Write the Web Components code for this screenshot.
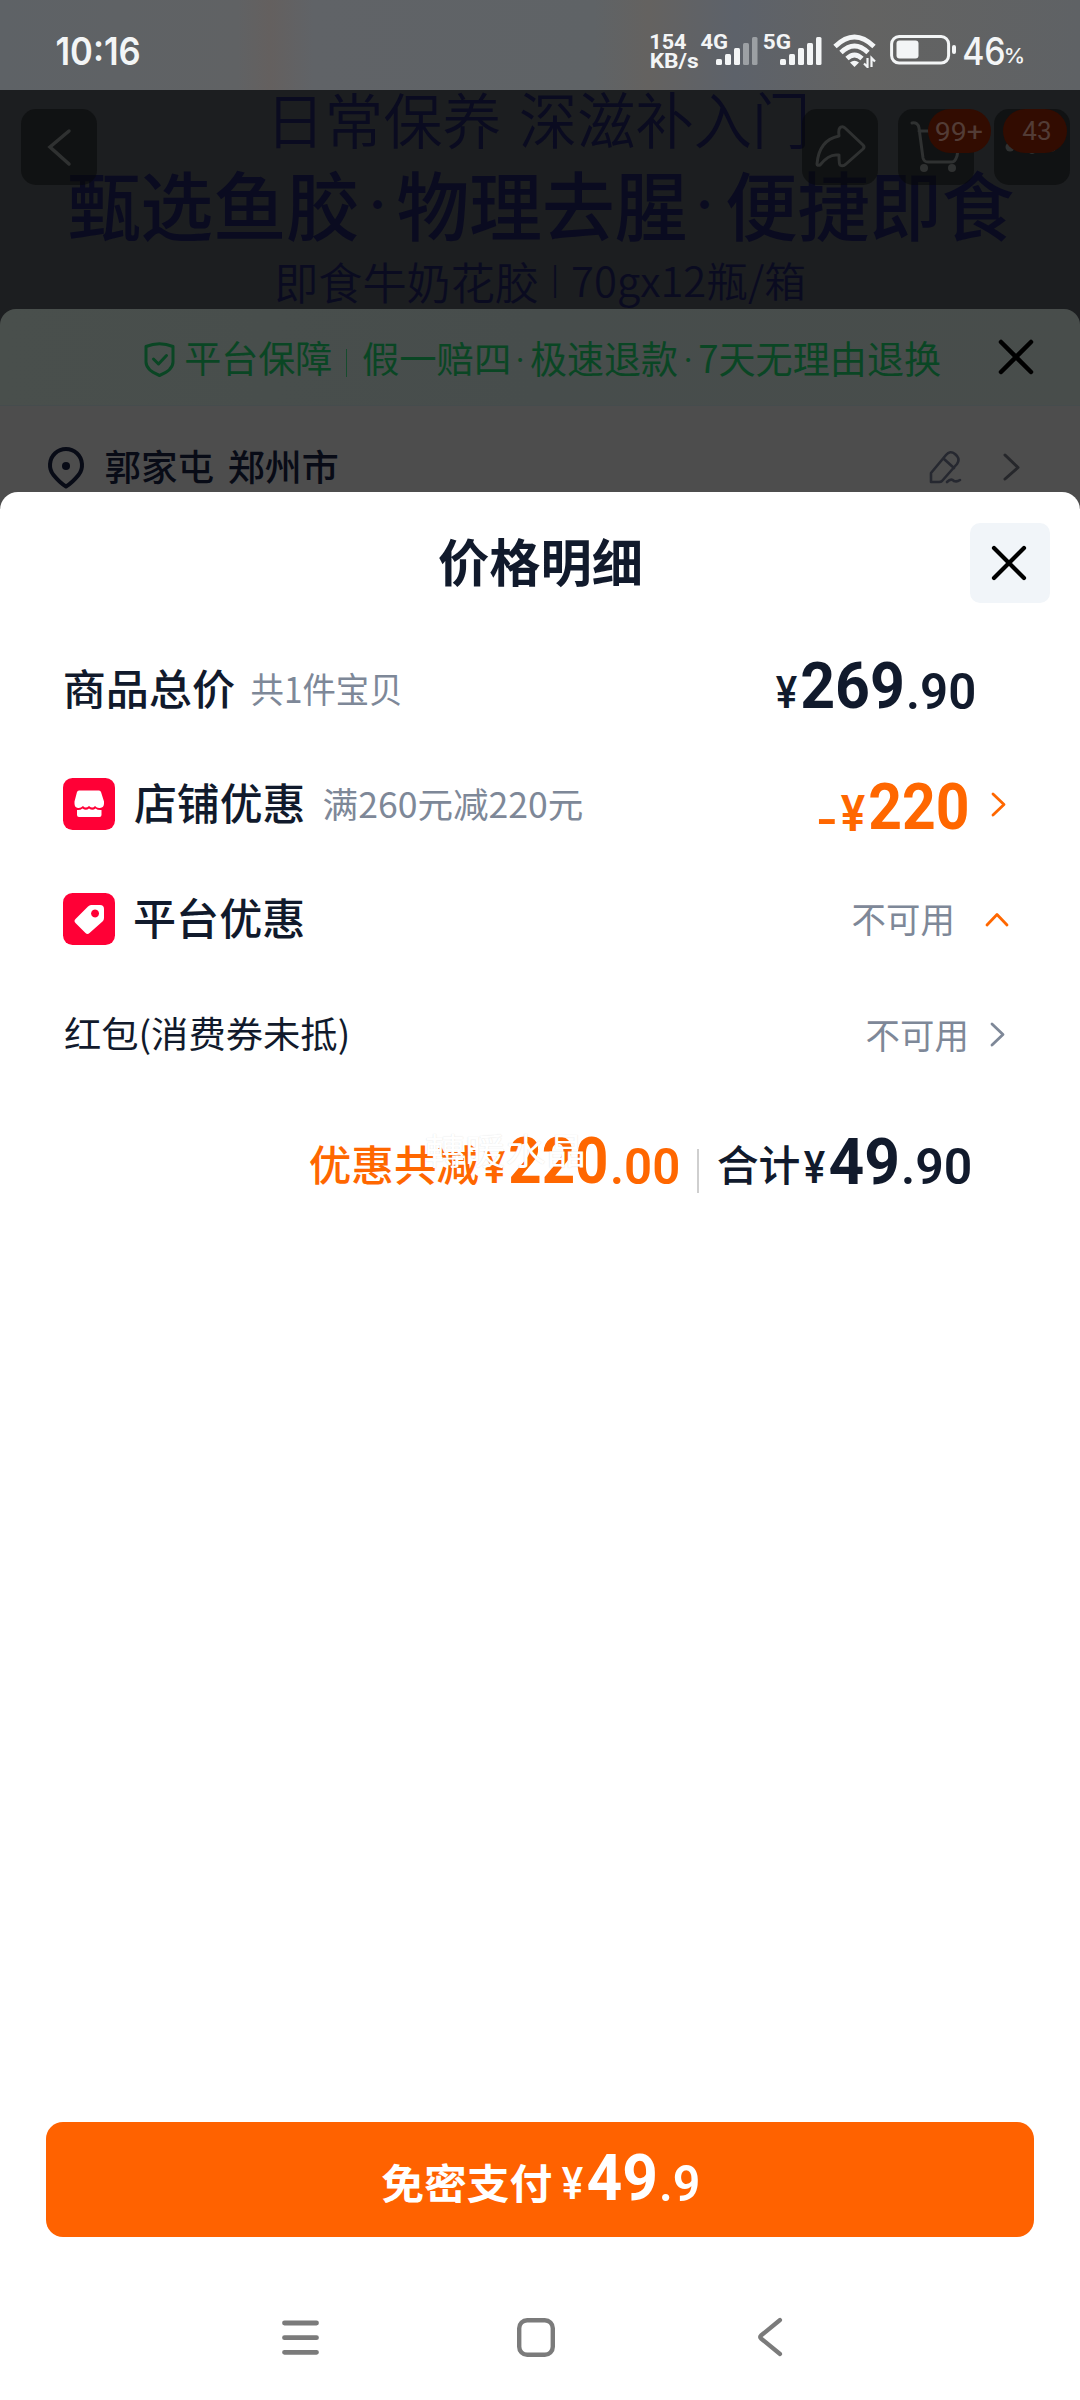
<!DOCTYPE html>
<html lang="zh-CN">
<head>
<meta charset="utf-8">
<title>价格明细</title>
<style>
html,body{margin:0;padding:0;background:#fff}
body{width:1080px;height:2400px;overflow:hidden;font-family:"Noto Sans CJK SC",sans-serif}
</style>
</head>
<body>
<phone-screen>
  <status-bar></status-bar>
  <product-hero></product-hero>
  <order-panel></order-panel>
  <price-sheet></price-sheet>
</phone-screen>
<script>
const define=(name,html,extra)=>customElements.define(name,class extends HTMLElement{
  connectedCallback(){
    if(this.shadowRoot)return;
    this.attachShadow({mode:'open'}).innerHTML=html;
    if(extra)extra(this,this.shadowRoot);
  }
});

/* Text whose visible ink fills a box of w × h pixels. */
const pen=document.createElement('canvas').getContext('2d');
customElements.define('fit-text',class extends HTMLElement{
  connectedCallback(){
    if(this.shadowRoot)return;
    const w=+this.getAttribute('w'),h=+this.getAttribute('h');
    const m=(this.getAttribute('m')||'0 0').split(' ');
    this.attachShadow({mode:'open'}).innerHTML=
      `<style>:host{display:block;flex:none;width:${w}px;height:${h}px;margin:${m[0]}px 0 0 ${m[1]}px}
      div{display:block;width:max-content;white-space:nowrap;line-height:1;transform-origin:0 0}
      i{display:inline-block;width:0;height:0}</style><div><i></i><slot></slot></div>`;
    const cs=getComputedStyle(this);
    pen.font=`${cs.fontWeight} 200px ${cs.fontFamily}`;
    const a=pen.measureText(this.textContent);
    const size=200*h/(a.actualBoundingBoxAscent+a.actualBoundingBoxDescent);
    const k=size/200,box=this.shadowRoot.querySelector('div');
    box.style.fontSize=size+'px';
    const base=this.shadowRoot.querySelector('i').getBoundingClientRect().bottom-box.getBoundingClientRect().top;
    const sx=w/((a.actualBoundingBoxLeft+a.actualBoundingBoxRight)*k);
    box.style.transform=`matrix(${sx},0,0,1,${a.actualBoundingBoxLeft*k*sx},${a.actualBoundingBoxAscent*k-base})`;
  }
});

define('status-bar',`<style>
:host{display:flex;height:90px;align-items:flex-start;color:#f3f5f6;font-family:Inter,sans-serif;font-weight:600;
background:linear-gradient(90deg,#5e6266 0,#606264 22%,#64605f 25%,#606367 29%,#5f6366 55%,#646260 60%,#5d626a 68%,#636362 80%,#5f6265 100%)}
svg{flex:none;display:block}
.net{font-family:Roboto,sans-serif;font-weight:700;display:flex;flex-direction:column}
.b{font-family:Roboto,sans-serif;font-weight:700}
.n{font-weight:500}
.p{font-weight:500}
</style>
<fit-text w="82" h="28" m="37 57">10:16</fit-text>
<div class="net" style="margin-left:511px;width:48px"><fit-text w="35" h="15" m="34 1">154</fit-text><fit-text w="47" h="16" m="4 1">KB/s</fit-text></div>
<fit-text class="b" w="26" h="15" m="34 3">4G</fit-text>
<svg width="42" height="28" style="margin:37px 0 0 -11px" fill="currentColor"><rect y="22" width="6" height="6" rx="1.5"/><rect x="9" y="17" width="6" height="11" rx="1.5"/><rect x="18" y="11" width="6" height="17" rx="1.5"/><g opacity=".42"><rect x="27" y="6" width="6" height="22" rx="1.5"/><rect x="36" y="0" width="5.5" height="28" rx="1.5"/></g></svg>
<fit-text class="b" w="26" h="15" m="34 6">5G</fit-text>
<svg width="42" height="28" style="margin:37px 0 0 -10px" fill="currentColor"><rect y="22" width="6" height="6" rx="1.5"/><rect x="9" y="17" width="6" height="11" rx="1.5"/><rect x="18" y="11" width="6" height="17" rx="1.5"/><rect x="27" y="6" width="6" height="22" rx="1.5"/><rect x="36" y="0" width="5.5" height="28" rx="1.5"/></svg>
<svg width="44" height="34" style="margin:34px 0 0 11px" fill="none" stroke="currentColor" stroke-width="4.8"><path d="M2 12.5Q21.500-6.500 41 12.500M8 18.500Q21.500 5.500 35 18.500M14 24.500Q21.500 17.500 29 24.500"/><path d="M21.500 33l-4.500-4.500q4.500-3.500 9 0z" fill="currentColor" stroke="none"/><path d="M34.500 24v9l-3.500-3.500M38.500 33v-9l3.500 3.500" stroke-width="2.2"/></svg>
<svg width="68" height="30" style="margin:35px 0 0 13px" fill="none" stroke="currentColor"><rect x="1.600" y="1.600" width="57" height="26.500" rx="7.500" stroke-width="3"/><rect x="6.500" y="5.500" width="22" height="18" rx="3" fill="currentColor" stroke="none"/><rect x="62" y="10" width="4" height="9" rx="2" fill="currentColor" stroke="none"/></svg>
<fit-text class="n" w="40" h="28" m="37 6">46</fit-text>
<fit-text class="p" w="17" h="15" m="48 2">%</fit-text>`);

define('product-hero',`<style>
:host{display:flex;position:relative;flex-direction:column;height:219px;background:#1c1e20;color:#0a0b20}
.l{display:flex;align-items:flex-start}
.t{font-weight:350}.m{font-weight:500}
nav{position:absolute;inset:19px 10px auto 21px;display:flex;color:#2f3131}
b{display:block;position:relative;flex:none;width:76px;height:76px;border-radius:15px;background:rgba(8,10,10,.55)}
b svg{display:block}
em{position:absolute;top:0;height:44px;border-radius:22px;background:#320c01;color:#523c36;font:400 20px Roboto}
</style>
<div class="l t" style="height:79px"><fit-text w="223" h="57" m="2 276">日常保养</fit-text><fit-text w="284" h="57" m="2 22">深滋补入门</fit-text></div>
<div class="l m" style="height:90px"><fit-text w="287" h="71" m="2 70">甄选鱼胶</fit-text><fit-text w="9" h="9" m="31 16">·</fit-text><fit-text w="287" h="71" m="2 16">物理去腥</fit-text><fit-text w="9" h="9" m="31 15">·</fit-text><fit-text w="286" h="71" m="2 18">便捷即食</fit-text></div>
<div class="l t" style="height:50px"><fit-text w="260" h="42" m="3 277">即食牛奶花胶</fit-text><fit-text w="2" h="33" m="6 17">|</fit-text><fit-text w="231" h="45" m="3 17">70gx12瓶/箱</fit-text></div>
<nav>
<b><svg width="76" height="76" fill="none" stroke="currentColor" stroke-width="3.500" stroke-linecap="round"><path d="M48 22 29 38 48 55"/></svg></b>
<b style="margin-left:705px"><svg width="76" height="76" fill="none" stroke="currentColor" stroke-width="3" stroke-linejoin="round"><path d="M39 18q-3 1-2 9Q17 31 15 55q0 2 3 1Q26 46 34 46h3q0 9 1 10 3 2 6-1L61 40q2-2 0-4L43 19q-2-2-4-1z"/></svg></b>
<b style="margin-left:20px"><svg width="76" height="76" fill="none" stroke="currentColor" stroke-width="3" stroke-linecap="round" stroke-linejoin="round"><path d="M14 14q6-1 7 5l4 30q1 4 5 4h24q3 0 5-6l3-19M21 22h30"/><g fill="currentColor" stroke="none"><circle cx="26" cy="59" r="4"/><circle cx="54" cy="59" r="4"/></g></svg><em style="left:30px;width:63px"><fit-text w="46" h="19" m="13 8">99+</fit-text></em></b>
<b style="margin-left:20px"><svg width="76" height="76" fill="currentColor"><circle cx="16" cy="38" r="4.500"/><circle cx="38" cy="40" r="5"/><circle cx="58" cy="38" r="4.500"/></svg><em style="left:9px;width:64px"><fit-text w="27" h="19" m="12 20">43</fit-text></em></b>
</nav>`);

define('order-panel',`<style>
:host{display:flex;position:relative;flex-direction:column;height:183px;background:#1c1e20}
.g{display:flex;height:97px;align-items:flex-start;background:linear-gradient(90deg,#494f4c,#474d4c 50%,#484d4b);border-radius:16px 16px 0 0;color:#0a4624;border-bottom:1px solid #454c4d;box-sizing:border-box}
.a{display:flex;height:86px;align-items:flex-start;background:#4d4d4d;color:#080b16;font-weight:500}
svg{flex:none;display:block;overflow:visible}
s{display:block;width:1px;height:28px;background:#164c2d;margin:40px 0 0 15px}
</style>
<div class="g">
<svg width="31" height="35" style="margin:33px 0 0 144px" fill="none" stroke="currentColor" stroke-width="3" stroke-linecap="round" stroke-linejoin="round"><path d="M2 4.500Q15.500-1 29 4.500V20Q29 28 15.500 33.500 2 28 2 20zM9.500 17l5 5 8-8.500"/></svg>
<fit-text w="145" h="35" m="32 11">平台保障</fit-text><s></s>
<fit-text w="145" h="34" m="33 16">假一赔四</fit-text><fit-text w="4" h="4" m="49 10">·</fit-text>
<fit-text w="146" h="35" m="32 9">极速退款</fit-text><fit-text w="4" h="4" m="49 9">·</fit-text>
<fit-text w="17" h="27" m="37 10">7</fit-text><fit-text w="220" h="35" m="32 3">天无理由退换</fit-text>
<svg width="34" height="34" style="margin:31px 0 0 59px" stroke="#000" stroke-width="4.500" stroke-linecap="round"><path d="M2 2 32 32M32 2 2 32"/></svg>
</div>
<div class="a">
<svg width="36" height="41" style="margin:42px 0 0 48px" fill="none" stroke="currentColor" stroke-width="4" stroke-linejoin="round"><path d="M18 38.500Q12 35 5.500 27A16 16 0 1 1 30.500 27Q24 35 18 38.500z"/><circle cx="18" cy="18" r="4" fill="currentColor" stroke="none"/></svg>
<fit-text w="107" h="35" m="43 22">郭家屯</fit-text><fit-text w="108" h="35" m="43 16">郑州市</fit-text>
<svg width="32" height="34" style="margin:45px 0 0 592px" fill="none" stroke="#262830" stroke-width="2.600" stroke-linecap="round" stroke-linejoin="round"><path d="M2 31V22L17 4Q21-1 26 3L28 5Q31 9 28 13L13 30Q12 31 10 31zM15 8l10 9M18 31q4-4 7-1 3 1 6-1"/></svg>
<svg width="17" height="28" style="margin:47px 0 0 42px" fill="none" stroke="#26272b" stroke-width="3" stroke-linecap="round" stroke-linejoin="round"><path d="M2 2 15 14.500 2 26"/></svg>
</div>`);

/* Currency sign, whole part and decimals, each with its own ink size. */
define('price-amount',``,(el,root)=>{
  const dec=el.getAttribute('dec'),v=el.getAttribute('v');
  root.innerHTML=`<style>:host{display:flex;align-items:flex-start;flex:none;font-family:Roboto,sans-serif;font-weight:700}.y{font-weight:${el.getAttribute('yw')||500}}.d{font-weight:600}</style>
  <fit-text class="y" w="${el.getAttribute('yen')||21}" h="${el.getAttribute('yh')||32}" m="${el.getAttribute('yt')||15} 0">¥</fit-text>
  <fit-text w="${el.getAttribute('w')}" h="48" m="0 5">${v}</fit-text>
  ${dec?`<fit-text class="d" w="${el.getAttribute('dw')}" h="37" m="12 7">${dec}</fit-text>`:''}`;
});

define('price-row',`<style>
:host{display:flex;align-items:flex-start;height:115px;color:#111a2c}
.r{display:flex;align-items:flex-start;margin-left:auto}
</style><slot></slot><div class="r"><slot name="end"></slot></div>`);

define('app-chevron','',(el,root)=>{
  const up=el.getAttribute('dir')==='up';
  root.innerHTML=`<style>:host{display:block;flex:none}svg{display:block}</style><svg width="${up?24:15}" height="${up?15:25}" fill="none" stroke="currentColor" stroke-width="2.800" stroke-linecap="round" stroke-linejoin="round"><path d="${up?'M2 13 12 2.500 22 13':'M2 2 13 12.500 2 23'}"/></svg>`;
});

define('pay-button',`<style>
:host{display:flex;align-items:flex-start;flex:none;width:988px;height:115px;margin:0 46px;border-radius:17px;background:#ff6200;color:#fff;font-weight:700}
</style><fit-text w="169" h="40" m="41 336">免密支付</fit-text>
<price-amount style="margin:30px 0 0 11px" v="49" w="67" dec=".9" dw="36"></price-amount>`);

define('nav-bar',`<style>:host{display:flex;align-items:flex-start;height:163px}svg{flex:none;display:block}</style>
<svg width="37" height="38" style="margin:82px 0 0 282px" stroke="#7b7b7b" stroke-width="4.800" stroke-linecap="round"><path d="M2.500 4h32M2.500 18.700h32M2.500 33.300h32"/></svg>
<svg width="38" height="39" style="margin:81px 0 0 198px" fill="none" stroke="#7b7b7b" stroke-width="4.400"><rect x="2.200" y="2.200" width="33.600" height="34.600" rx="8"/></svg>
<svg width="25" height="40" style="margin:80px 0 0 203px" fill="none" stroke="#7b7b7b" stroke-width="4.200" stroke-linecap="round" stroke-linejoin="round"><path d="M22 3 3 18.500q-1.500 1.500 0 3L22 37"/></svg>`);

define('price-sheet',`<style>
:host{display:block;position:relative;background:#4d4d4d}
main{display:flex;position:relative;flex-direction:column;height:1908px;background:#fff;border-radius:18px 18px 0 0}
header{display:flex;align-items:flex-start;height:141px;color:#111a2c;font-weight:700}
svg{display:block;flex:none}
.x{display:block;flex:none;width:80px;height:80px;border-radius:10px;background:#f1f5f9;margin:31px 0 0 330px}
.m{font-weight:500}.s{color:#7e8898;font-weight:400}
.o{color:#ff6700}
.rows{flex:1}
.tot{display:flex;align-items:flex-start;font-weight:500;color:#111a2c}
.tot s{display:block;width:2px;height:44px;background:#cfcfcf;margin:13px 0 0 19px}
.wm{position:absolute;left:426px;top:642px;color:#fff;font-weight:400;text-shadow:0 0 1px rgba(90,90,90,.22)}
</style>
<main>
<header><fit-text w="201" h="49" m="46 439">价格明细</fit-text><div class="x"><svg width="80" height="80" stroke="#000" stroke-width="4.200" stroke-linecap="round"><path d="M24 25 54 55M54 25 24 55"/></svg></div></header>
<section class="rows">
<price-row><fit-text class="m" w="169" h="40" m="36 65">商品总价</fit-text><fit-text class="s" w="148" h="33" m="40 18">共1件宝贝</fit-text>
<price-amount slot="end" style="margin:28px 106px 0 0" v="269" w="100" dec=".90" dw="65"></price-amount></price-row>
<price-row><svg width="52" height="52" style="margin:30px 0 0 63px"><rect width="52" height="52" rx="9.500" fill="#ff0036"/><path fill="#fff" d="M16 12.500h20q1.500 0 2 1.500l3 9.500v2q0 4-4 4.500-3 .5-5-2-2.500 3-6 0-3.500 3-6 0-2.500 2.500-5 2-3.500-.5-3.500-4.500v-2L14 14q.5-1.500 2-1.500zM14 32q3 .5 5.500-1.500 3.500 2.500 6.500 0 3.500 2.500 6.500 0 2.500 2 6 1.500v5q0 2-2 2H16q-2 0-2-2z"/></svg>
<fit-text class="m" w="168" h="41" m="35 20">店铺优惠</fit-text><fit-text class="s" w="258" h="33" m="40 21">满260元减220元</fit-text>
<div slot="end" class="o" style="display:flex;align-items:flex-start;margin:0 74px 0 0;font:700 20px Roboto"><fit-text w="16" h="5" m="71 0">-</fit-text><price-amount style="margin:34px 0 0 6px" v="220" w="97" yen="24" yh="36" yt="13" yw="600"></price-amount><app-chevron style="margin:44px 0 0 24px"></app-chevron></div></price-row>
<price-row><svg width="52" height="52" style="margin:30px 0 0 63px"><rect width="52" height="52" rx="9.500" fill="#ff0036"/><path fill="#fff" fill-rule="evenodd" d="M28 12h9q4 0 4 4v9q0 2-1.500 3.500L26.500 40q-2 2-4 0L12.500 30q-2-2 0-4L25 13.500Q26.500 12 28 12zm4 4.500a4 4 0 1 0 .1 0z"/></svg>
<fit-text class="m" w="168" h="41" m="35 20">平台优惠</fit-text>
<div slot="end" style="display:flex;align-items:flex-start;margin:0 71px 0 0"><fit-text class="s" w="98" h="30" m="43 0">不可用</fit-text><app-chevron class="o" dir="up" style="margin:49px 0 0 34px"></app-chevron></div></price-row>
<price-row><fit-text w="282" h="38" m="39 65">红包(消费券未抵)</fit-text>
<div slot="end" style="display:flex;align-items:flex-start;margin:0 75px 0 0"><fit-text class="s" w="98" h="30" m="44 0">不可用</fit-text><app-chevron class="s" style="margin:44px 0 0 25px"></app-chevron></div></price-row>
<div class="tot" style="padding-top:43px"><fit-text class="o" w="168" h="40" m="9 310">优惠共减</fit-text><price-amount class="o" style="margin-left:6px" v="220" w="96" dec=".00" dw="65"></price-amount><s></s><fit-text w="81" h="40" m="9 19">合计</fit-text><price-amount style="margin-left:5px" v="49" w="67" dec=".90" dw="66"></price-amount></div>
</section>
<pay-button></pay-button>
<nav-bar></nav-bar>
<fit-text class="wm" w="157" h="34">轉暖水晶</fit-text>
</main>`);

define('phone-screen',`<style>:host{display:flex;flex-direction:column;width:1080px;height:2400px;overflow:hidden}</style><slot></slot>`);
</script>
</body>
</html>
